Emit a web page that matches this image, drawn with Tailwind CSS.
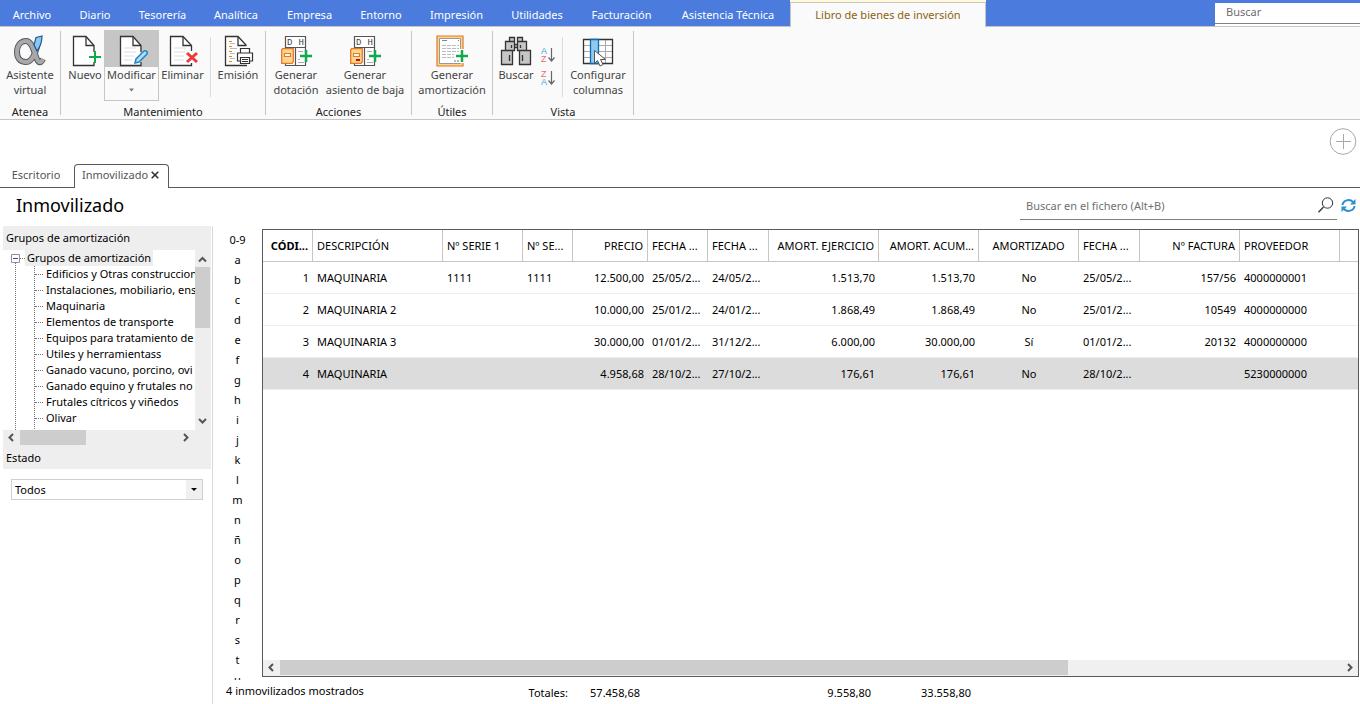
<!DOCTYPE html>
<html lang="es">
<head>
<meta charset="utf-8">
<title>Libro de bienes de inversión</title>
<script src="https://cdn.jsdelivr.net/npm/@tailwindcss/browser@4"></script>
</head>
<body class="flex h-screen flex-col overflow-hidden bg-white font-['Noto_Sans',sans-serif] text-[11px] leading-4 text-black">

<!-- Menu -->
<header class="flex h-[27px] shrink-0 border-b border-[#c6c6c6] bg-[#4b7bdc]">
  <nav class="-mb-px flex h-[27px] shrink-0 text-white">
    <button class="w-16 border-b border-[#c6c6c6] pt-[3px]">Archivo</button>
    <button class="w-[62px] border-b border-[#c6c6c6] pt-[3px]">Diario</button>
    <button class="w-[73px] border-b border-[#c6c6c6] pt-[3px]">Tesorería</button>
    <button class="w-[74px] border-b border-[#c6c6c6] pt-[3px]">Analítica</button>
    <button class="w-[73px] border-b border-[#c6c6c6] pt-[3px]">Empresa</button>
    <button class="w-[70px] border-b border-[#c6c6c6] pt-[3px]">Entorno</button>
    <button class="w-[81px] border-b border-[#c6c6c6] pt-[3px]">Impresión</button>
    <button class="w-[80px] border-b border-[#c6c6c6] pt-[3px]">Utilidades</button>
    <button class="w-[89px] border-b border-[#c6c6c6] pt-[3px]">Facturación</button>
    <button class="w-[124px] border-b border-[#c6c6c6] pt-[3px]">Asistencia Técnica</button>
    <div class="flex w-[196px] flex-col bg-[#fafafa]">
      <div class="h-[2px] bg-[#fff9d8]"></div>
      <button class="grow border-x border-t border-[#c6c6c6] pb-[1px] text-[#8a6410]">Libro de bienes de inversión</button>
    </div>
  </nav>
  <div class="grow"></div>
  <div class="flex w-[145px] shrink-0 items-start bg-white">
    <input type="text" aria-label="Buscar" placeholder="Buscar" class="h-6 w-full border-t-[3px] border-b border-t-[#4b7bdc] border-b-[#808080] bg-white px-[11px] pb-[3px] outline-none placeholder:text-[#6d6d6d]">
  </div>
</header>

<!-- Ribbon -->
<section class="flex h-[93px] shrink-0 border-b border-[#c6c6c6] bg-[#fafafa] pt-1 text-[#444] leading-[15px]">
  <div class="flex h-[84px] w-[61px] flex-col border-r border-[#c6c6c6]">
    <div class="flex h-[73px] shrink-0 items-start justify-center">
      <button class="flex w-[58px] flex-col items-center pt-1">
        <svg class="h-8 w-8 shrink-0" viewBox="0 0 32 32" fill="none">
          <path d="M24 8c-2 8-5 19-12 19C6 27 3 23 3 17c0-7 4-11 9-11 8 0 9 19 13 21 2 1 3-1 4-3" stroke="#58585a" stroke-width="6"/>
          <path d="M24 8c-2 8-5 19-12 19C6 27 3 23 3 17c0-7 4-11 9-11 8 0 9 19 13 21 2 1 3-1 4-3" stroke="#a6a8ab" stroke-width="4"/>
          <path d="M22 2.500l6-1.500c0 6-2 11-5 15l-3-6z" fill="#8ec6ee" stroke="#1c5a93" stroke-width="1.2"/>
        </svg>
        <span>Asistente<br>virtual</span>
      </button>
    </div>
    <div class="text-center text-[#222]">Atenea</div>
  </div>

  <div class="flex h-[84px] w-[205px] flex-col border-r border-[#c6c6c6]">
    <div class="flex h-[73px] shrink-0 items-start pl-[5px]">
      <button class="flex w-[38px] flex-col items-center pt-1">
        <svg class="h-8 w-8 shrink-0" viewBox="0 0 32 32" fill="none">
          <path d="M25 17v-6.500L17 1.500H4.500v29H25V27" fill="#fff" stroke="#333" stroke-width="1.300"/>
          <path d="M17 2v8.500h8" stroke="#333" stroke-width="1.300"/>
          <path d="M26 16v12M20 22h12" stroke="#12a84d" stroke-width="2"/>
        </svg>
        <span>Nuevo</span>
      </button>
      <button class="-mt-[1px] flex h-[71px] w-[55px] flex-col items-center border border-[#c6c6c6] bg-[#fafafa]">
        <span class="flex h-9 w-full shrink-0 justify-center bg-[#c6c6c6] pt-1">
          <svg class="h-8 w-8 shrink-0" viewBox="0 0 32 32" fill="none">
            <path d="M25 30.500H4.500v-29H17l7.500 8.500v9z" fill="#fff"/>
            <path d="M25 27v3.500H4.500v-29H17l8 9V17" stroke="#333" stroke-width="1.300"/>
            <path d="M17 2v8.500h8" stroke="#333" stroke-width="1.300"/>
            <path d="M8 13h12M8 17h12M8 21h10M8 25h8" stroke="#ddd"/>
            <path d="M19 28l1-4 8-8c2-1 4 1 3 3l-8 8z" fill="#b9dcf3" stroke="#1f86c7" stroke-width="1.500"/>
          </svg>
        </span>
        <span>Modificar</span>
        <svg class="mt-[6px] h-1 w-[5px]" viewBox="0 0 5 4"><path d="M0 .5h5L2.500 3.500z" fill="#777"/></svg>
      </button>
      <button class="flex w-[47px] flex-col items-center pt-1">
        <svg class="h-8 w-8 shrink-0" viewBox="0 0 32 32" fill="none">
          <path d="M24.500 16v-5.500L16 1.500H3.500v29H24.500V28" fill="#fff" stroke="#333" stroke-width="1.300"/>
          <path d="M16 2v8.500h8" stroke="#333" stroke-width="1.300"/>
          <path d="M7 13h12M7 17h12M7 21h10M7 25h10" stroke="#ddd"/>
          <path d="M20 18l10 9M30 18l-10 9" stroke="#ee3a3a" stroke-width="3"/>
        </svg>
        <span>Eliminar</span>
      </button>
      <div class="mt-1.5 ml-1 h-[60px] w-px bg-[#dcdcdc]"></div>
      <button class="ml-1 flex w-[46px] flex-col items-center pt-1">
        <svg class="h-8 w-8 shrink-0" viewBox="0 0 32 32" fill="none">
          <path d="M24 11v-1L16 1.500H3.500v29H25" fill="#fff" stroke="#333" stroke-width="1.300"/>
          <path d="M16 2v8.500h8" stroke="#333" stroke-width="1.300"/>
          <path d="M7 6.500h3M7 11.500h3M7 16.500h3M7 21.500h3M7 26.500h3" stroke="#e8890c" stroke-width="1.200"/>
          <path d="M8 8.500h5M8 13.500h7M8 18.500h5M8 23.500h5" stroke="#bbb"/>
          <path d="M18.500 18v-4.500h9V18M18.500 26h-3v-8h15v8h-3M18.500 22.500h9v6h-9zM20 24.500h6M20 26.500h6" fill="#fff" stroke="#333" stroke-width="1.200"/>
        </svg>
        <span>Emisión</span>
      </button>
    </div>
    <div class="text-center text-[#222]">Mantenimiento</div>
  </div>

  <div class="flex h-[84px] w-[146px] flex-col border-r border-[#c6c6c6]">
    <div class="flex h-[73px] shrink-0 items-start pl-[5px]">
      <button class="flex w-[50px] flex-col items-center pt-1">
        <svg class="h-8 w-8 shrink-0" viewBox="0 0 32 32" fill="none">
          <path d="M25.500 18V1.500H5.500v29H25.500V26M5.500 12.500H25.500M15.500 12v18" fill="#fff" stroke="#555" stroke-width="1.200"/>
          <text x="7" y="10" font-family="Liberation Mono, monospace" font-size="9" fill="#444">D</text>
          <text x="18.500" y="10" font-family="Liberation Mono, monospace" font-size="9" fill="#444">H</text>
          <path d="M18 16.500h5M20 20.500h2M18 24.500h2M18 27.500h6" stroke="#aaa"/>
          <path d="M1.700 15l1-1.300h10.600v13L12 28.300H1.700z" fill="#fbd78b" stroke="#e6772a" stroke-width="1.300"/>
          <path d="M4.500 18.500h6v3h-6z" fill="#fff" stroke="#e6772a" stroke-width="1.200"/>
          <path d="M26 15v12M20 21h12" stroke="#12a84d" stroke-width="2.500"/>
        </svg>
        <span>Generar<br>dotación</span>
      </button>
      <button class="flex w-[88px] flex-col items-center pt-1">
        <svg class="h-8 w-8 shrink-0" viewBox="0 0 32 32" fill="none">
          <path d="M25.500 18V1.500H5.500v29H25.500V26M5.500 12.500H25.500M15.500 12v18" fill="#fff" stroke="#555" stroke-width="1.200"/>
          <text x="7" y="10" font-family="Liberation Mono, monospace" font-size="9" fill="#444">D</text>
          <text x="18.500" y="10" font-family="Liberation Mono, monospace" font-size="9" fill="#444">H</text>
          <path d="M18 16.500h5M20 20.500h2M18 24.500h2M18 27.500h6" stroke="#aaa"/>
          <path d="M1.700 15l1-1.300h10.600v13L12 28.300H1.700z" fill="#fbd78b" stroke="#e6772a" stroke-width="1.300"/>
          <path d="M4.500 18.500h6v3h-6z" fill="#fff" stroke="#e6772a" stroke-width="1.200"/>
          <path d="M7 25h4" stroke="#d9001b" stroke-width="2"/>
          <path d="M26 15v12M20 21h12" stroke="#12a84d" stroke-width="2.500"/>
        </svg>
        <span class="whitespace-nowrap">Generar<br>asiento de baja</span>
      </button>
    </div>
    <div class="text-center text-[#222]">Acciones</div>
  </div>

  <div class="flex h-[84px] w-[81px] flex-col border-r border-[#c6c6c6]">
    <div class="flex h-[73px] shrink-0 items-start justify-center">
      <button class="flex w-[78px] flex-col items-center pt-1">
        <svg class="h-8 w-8 shrink-0" viewBox="0 0 32 32" fill="none">
          <path d="M1 1h26v30H1z" fill="#fbd78b" stroke="#e6772a" stroke-width="1.200"/>
          <path d="M3.500 3.500h21v25h-21z" fill="#fff" stroke="#999"/>
          <path d="M6 5.500h5M22 5.500h1" stroke="#888"/>
          <path d="M6 10.500h17M6 13.500h17M6 16.500h17M6 19.500h12M6 22.500h12" stroke="#bbb" stroke-dasharray="4 1"/>
          <path d="M18 26h2M21 26h2" stroke="#bbb" stroke-width="2"/>
          <path d="M19 21h13M26 14v14" stroke="#fff" stroke-width="4"/>
          <path d="M20 21h12M26 15v12" stroke="#12a84d" stroke-width="2.500"/>
        </svg>
        <span>Generar<br>amortización</span>
      </button>
    </div>
    <div class="text-center text-[#222]">Útiles</div>
  </div>

  <div class="flex h-[84px] w-[141px] flex-col border-r border-[#c6c6c6]">
    <div class="flex h-[73px] shrink-0 items-start pl-1">
      <button class="flex w-[38px] flex-col items-center pt-1">
        <svg class="h-8 w-8 shrink-0" viewBox="0 0 32 32" fill="#c6c6c6" stroke="#333" stroke-width="1.300">
          <path d="M9.500 2.500h5v4h-5zM17.500 2.500h5v4h-5zM5.500 6.500h9v9h-9zM17.500 6.500h9v9h-9zM1.500 15.500h11v14h-11zM19.500 15.500h11v14h-11zM14.500 9.500h3v3h-3zM9.500 20v6M22.500 20v6M11.500 10v3M20.500 10v3"/>
        </svg>
        <span>Buscar</span>
      </button>
      <div class="flex w-[26px] flex-col items-center gap-[7px] pt-4">
        <button aria-label="Orden ascendente"><svg class="h-4 w-4" viewBox="0 0 16 16" fill="none">
          <text x="1" y="7" font-family="Liberation Sans, sans-serif" font-size="9" fill="#4ba0da">A</text>
          <text x="1" y="15" font-family="Liberation Sans, sans-serif" font-size="9" fill="#ee6a6a">Z</text>
          <path d="M11.500 1v13M8.500 10.500l3 3.500 3-3.500" stroke="#666" stroke-width="1.200"/></svg></button>
        <button aria-label="Orden descendente"><svg class="h-4 w-4" viewBox="0 0 16 16" fill="none">
          <text x="1" y="7" font-family="Liberation Sans, sans-serif" font-size="9" fill="#ee6a6a">Z</text>
          <text x="1" y="15" font-family="Liberation Sans, sans-serif" font-size="9" fill="#4ba0da">A</text>
          <path d="M11.500 1v13M8.500 10.500l3 3.500 3-3.500" stroke="#666" stroke-width="1.200"/></svg></button>
      </div>
      <div class="mt-1.5 ml-[1px] h-[60px] w-px bg-[#dcdcdc]"></div>
      <button class="ml-[5px] flex w-[60px] flex-col items-center pt-1">
        <svg class="h-8 w-8 shrink-0" viewBox="0 0 32 32" fill="none">
          <path d="M1.500 4.500h29v24h-29z" fill="#fff"/>
          <path d="M1 10.500h30M1 16.500h30M1 22.500h30M23.500 4v24" stroke="#aaa"/>
          <path d="M1.500 4.500h29v24h-29z" stroke="#333" stroke-width="1.300"/>
          <path d="M8.500 4.500h8v24h-8z" fill="#92c9f0" stroke="#0f6ab4" stroke-width="1.300"/>
          <path d="M12.500 15.500v13l3-3 2.500 5.500 3-1.500-2.500-5h5z" fill="#fff" stroke="#555"/>
        </svg>
        <span>Configurar<br>columnas</span>
      </button>
    </div>
    <div class="text-center text-[#222]">Vista</div>
  </div>
</section>

<div class="flex h-11 shrink-0 justify-end pt-2 pr-[3px]">
  <button aria-label="Añadir panel" class="h-7 w-7">
    <svg class="h-7 w-7" viewBox="0 0 28 28" fill="none" stroke="#a8a8a8"><circle cx="14" cy="13.500" r="12.800"/><path d="M14.500 6v15M7 13.500h15"/></svg>
  </button>
</div>

<!-- Document tabs -->
<div class="flex h-6 shrink-0 border-b border-[#5a5a5a] text-[#555]">
  <button class="w-[74px] pb-[2px] pr-[2px]">Escritorio</button>
  <button class="-mb-px flex h-6 w-[95px] items-center gap-[3px] rounded-t-[4px] border border-b-0 border-[#5a5a5a] bg-white pb-[3px] pl-[7px]">Inmovilizado
    <svg class="h-2 w-2" viewBox="0 0 8 8"><path d="M.7.7l6.600 6.600M7.300.7L.7 7.300" stroke="#333" stroke-width="1.600"/></svg>
  </button>
</div>

<div class="flex h-[38px] shrink-0 items-start pr-1">
  <h1 class="grow pt-[5px] pl-4 text-[18px] leading-6">Inmovilizado</h1>
  <div class="mt-[3px] flex h-[29px] w-[317px] items-center border-b border-[#808080]">
    <input type="text" aria-label="Buscar en el fichero" placeholder="Buscar en el fichero (Alt+B)" class="h-7 grow bg-transparent pl-1.5 outline-none placeholder:text-[#707070]">
    <button aria-label="Buscar"><svg class="mr-[3px] h-4 w-4" viewBox="0 0 16 16" fill="none" stroke="#333"><circle cx="9.500" cy="6" r="5.200"/><path d="M5.500 10L.5 15.200" stroke-width="1.300"/></svg></button>
  </div>
  <button aria-label="Actualizar" class="mt-[10px] ml-1">
    <svg class="h-[15px] w-[15px]" viewBox="0 0 15 15" fill="none" stroke="#2a8fd0" stroke-width="2"><path d="M1.500 7a6 5.500 0 0 1 10.500-3M13.500 8a6 5.500 0 0 1-10.500 3"/><path d="M14.500 1v5.500H9zM.5 14V8.500H6z" fill="#2a8fd0" stroke="none"/></svg>
  </button>
</div>

<main class="flex min-h-0 grow">
  <!-- Filters -->
  <aside class="w-[213px] shrink-0 border-r border-[#d9d9d9] pl-[3px] pr-[1px]">
    <h2 class="h-[23px] bg-[#eee] pl-[3px] pt-1">Grupos de amortización</h2>
    <div class="flex h-[181px] bg-[#eee]">
      <div class="relative mt-[1px] h-[180px] min-w-0 grow overflow-hidden bg-white">
        <div class="absolute top-3 left-3 h-[170px] border-l border-dotted border-[#777]"></div>
        <div class="absolute top-4 left-[31px] h-[165px] border-l border-dotted border-[#777]"></div>
        <div class="flex h-4 items-center pl-2">
          <svg class="relative h-[9px] w-[9px]" viewBox="0 0 9 9"><path d="M.5.5h8v8h-8z" fill="#fff" stroke="#919191"/><path d="M2 4.500h5" stroke="#3050a0"/></svg>
          <span class="w-[5px] border-t border-dotted border-[#777]"></span>
          <span class="bg-[#eee] px-[2px]">Grupos de amortización</span>
        </div>
        <ul class="whitespace-nowrap pl-8">
          <li class="flex h-4 items-center gap-[3px]"><i class="w-2 shrink-0 border-t border-dotted border-[#777]"></i>Edificios y Otras construcciones</li>
          <li class="flex h-4 items-center gap-[3px]"><i class="w-2 shrink-0 border-t border-dotted border-[#777]"></i>Instalaciones, mobiliario, ens</li>
          <li class="flex h-4 items-center gap-[3px]"><i class="w-2 shrink-0 border-t border-dotted border-[#777]"></i>Maquinaria</li>
          <li class="flex h-4 items-center gap-[3px]"><i class="w-2 shrink-0 border-t border-dotted border-[#777]"></i>Elementos de transporte</li>
          <li class="flex h-4 items-center gap-[3px]"><i class="w-2 shrink-0 border-t border-dotted border-[#777]"></i>Equipos para tratamiento de</li>
          <li class="flex h-4 items-center gap-[3px]"><i class="w-2 shrink-0 border-t border-dotted border-[#777]"></i>Utiles y herramientass</li>
          <li class="flex h-4 items-center gap-[3px]"><i class="w-2 shrink-0 border-t border-dotted border-[#777]"></i>Ganado vacuno, porcino, ovi</li>
          <li class="flex h-4 items-center gap-[3px]"><i class="w-2 shrink-0 border-t border-dotted border-[#777]"></i>Ganado equino y frutales no</li>
          <li class="flex h-4 items-center gap-[3px]"><i class="w-2 shrink-0 border-t border-dotted border-[#777]"></i>Frutales cítricos y viñedos</li>
          <li class="flex h-4 items-center gap-[3px]"><i class="w-2 shrink-0 border-t border-dotted border-[#777]"></i>Olivar</li>
        </ul>
      </div>
      <div class="flex w-4 shrink-0 flex-col pr-[1px]">
        <svg class="mt-1 h-3 w-[15px]" viewBox="0 0 15 12"><path d="M4 8.500L7.500 5 11 8.500" fill="none" stroke="#555" stroke-width="2"/></svg>
        <div class="mt-[2px] h-[61px] bg-[#cdcdcd]"></div>
        <div class="grow"></div>
        <svg class="mb-[2px] h-3 w-[15px]" viewBox="0 0 15 12"><path d="M4 3L7.500 6.500 11 3" fill="none" stroke="#555" stroke-width="2"/></svg>
      </div>
    </div>
    <div class="flex h-4 items-start bg-[#eee]">
      <svg class="h-[15px] w-[17px]" viewBox="0 0 17 15"><path d="M10 4L6.500 7.500 10 11" fill="none" stroke="#555" stroke-width="2"/></svg>
      <div class="h-[15px] w-[66px] bg-[#cdcdcd]"></div>
      <div class="grow"></div>
      <svg class="mr-4 h-[15px] w-[15px]" viewBox="0 0 15 15"><path d="M4 4l3.500 3.500L4 11" fill="none" stroke="#555" stroke-width="2"/></svg>
    </div>
    <label for="estado" class="block h-[23px] bg-[#eee] pl-[3px] pt-1">Estado</label>
    <div class="relative mt-[10px] mr-2 ml-2">
      <select id="estado" class="block h-[21px] w-full appearance-none border border-[#d0d0d0] bg-white pl-[3px] outline-none"><option>Todos</option></select>
      <span class="pointer-events-none absolute top-[1px] right-[1px] flex h-[19px] w-4 items-center justify-center bg-[#f0f0f0]"><svg class="h-[3px] w-[6px]" viewBox="0 0 6 3"><path d="M0 0h6L3 3z"/></svg></span>
    </div>
  </aside>

  <div class="flex min-w-0 grow flex-col pt-[3px]">
    <div class="flex min-h-0 grow">
      <!-- Index -->
      <div class="flex h-[451px] w-[49px] shrink-0 flex-col overflow-hidden pt-[1px] text-center leading-5">
        <a href="#" class="h-5 shrink-0">0-9</a><a href="#" class="h-5 shrink-0">a</a><a href="#" class="h-5 shrink-0">b</a><a href="#" class="h-5 shrink-0">c</a><a href="#" class="h-5 shrink-0">d</a><a href="#" class="h-5 shrink-0">e</a><a href="#" class="h-5 shrink-0">f</a><a href="#" class="h-5 shrink-0">g</a><a href="#" class="h-5 shrink-0">h</a><a href="#" class="h-5 shrink-0">i</a><a href="#" class="h-5 shrink-0">j</a><a href="#" class="h-5 shrink-0">k</a><a href="#" class="h-5 shrink-0">l</a><a href="#" class="h-5 shrink-0">m</a><a href="#" class="h-5 shrink-0">n</a><a href="#" class="h-5 shrink-0">ñ</a><a href="#" class="h-5 shrink-0">o</a><a href="#" class="h-5 shrink-0">p</a><a href="#" class="h-5 shrink-0">q</a><a href="#" class="h-5 shrink-0">r</a><a href="#" class="h-5 shrink-0">s</a><a href="#" class="h-5 shrink-0">t</a><a href="#" class="h-5 shrink-0">u</a>
      </div>
      <!-- Assets -->
      <div class="mr-[1px] flex min-w-0 grow flex-col border border-[#5a5a5a]">
        <table class="w-full table-fixed border-separate border-spacing-0 whitespace-nowrap text-left [&_td]:h-8 [&_td]:overflow-hidden [&_td]:border-b [&_td]:border-[#eee] [&_td]:px-1 [&_th]:h-8 [&_th]:overflow-hidden [&_th]:border-r [&_th]:border-b [&_th]:border-[#c6c6c6] [&_th]:px-1 [&_th]:font-normal">
          <colgroup><col class="w-[50px]"><col class="w-[130px]"><col class="w-[80px]"><col class="w-[50px]"><col class="w-[75px]"><col class="w-[60px]"><col class="w-[61px]"><col class="w-[110px]"><col class="w-[100px]"><col class="w-[100px]"><col class="w-[61px]"><col class="w-[100px]"><col class="w-[100px]"><col></colgroup>
          <thead><tr>
            <th class="text-right"><b class="font-bold">CÓDI...</b></th><th>DESCRIPCIÓN</th><th>Nº SERIE 1</th><th>Nº SE...</th><th class="text-right">PRECIO</th><th>FECHA ...</th><th>FECHA ...</th><th class="text-right">AMORT. EJERCICIO</th><th class="text-right">AMORT. ACUM...</th><th class="text-center">AMORTIZADO</th><th>FECHA ...</th><th class="text-right">Nº FACTURA</th><th>PROVEEDOR</th><th class="border-r-0!"></th>
          </tr></thead>
          <tbody>
            <tr><td class="text-right">1</td><td>MAQUINARIA</td><td>1111</td><td>1111</td><td class="text-right">12.500,00</td><td>25/05/2...</td><td>24/05/2...</td><td class="text-right">1.513,70</td><td class="text-right">1.513,70</td><td class="text-center">No</td><td>25/05/2...</td><td class="text-right">157/56</td><td>4000000001</td><td></td></tr>
            <tr><td class="text-right">2</td><td>MAQUINARIA 2</td><td></td><td></td><td class="text-right">10.000,00</td><td>25/01/2...</td><td>24/01/2...</td><td class="text-right">1.868,49</td><td class="text-right">1.868,49</td><td class="text-center">No</td><td>25/01/2...</td><td class="text-right">10549</td><td>4000000000</td><td></td></tr>
            <tr><td class="text-right">3</td><td>MAQUINARIA 3</td><td></td><td></td><td class="text-right">30.000,00</td><td>01/01/2...</td><td>31/12/2...</td><td class="text-right">6.000,00</td><td class="text-right">30.000,00</td><td class="text-center">Sí</td><td>01/01/2...</td><td class="text-right">20132</td><td>4000000000</td><td></td></tr>
            <tr class="bg-[#dcdcdc]"><td class="text-right">4</td><td>MAQUINARIA</td><td></td><td></td><td class="text-right">4.958,68</td><td>28/10/2...</td><td>27/10/2...</td><td class="text-right">176,61</td><td class="text-right">176,61</td><td class="text-center">No</td><td>28/10/2...</td><td class="text-right"></td><td>5230000000</td><td></td></tr>
          </tbody>
        </table>
        <div class="grow"></div>
        <div class="flex h-4 items-start bg-[#f0f0f0]">
          <svg class="h-[15px] w-[17px] shrink-0" viewBox="0 0 17 15"><path d="M10 4L6.500 7.500 10 11" fill="none" stroke="#555" stroke-width="2"/></svg>
          <div class="h-[15px] w-[72%] bg-[#cdcdcd]"></div>
          <div class="grow"></div>
          <svg class="h-[15px] w-[15px] shrink-0" viewBox="0 0 15 15"><path d="M5 4l3.500 3.500L5 11" fill="none" stroke="#555" stroke-width="2"/></svg>
        </div>
      </div>
    </div>
    <!-- Totals -->
    <footer class="flex h-[27px] shrink-0 items-start pl-[13px] pt-2">
      <span class="-mt-[2px] w-[242px]">4 inmovilizados mostrados</span>
      <span class="w-[100px] text-right">Totales:</span>
      <span class="w-[72px] text-right">57.458,68</span>
      <span class="w-[231px] text-right">9.558,80</span>
      <span class="w-[100px] text-right">33.558,80</span>
    </footer>
  </div>
</main>
</body>
</html>
